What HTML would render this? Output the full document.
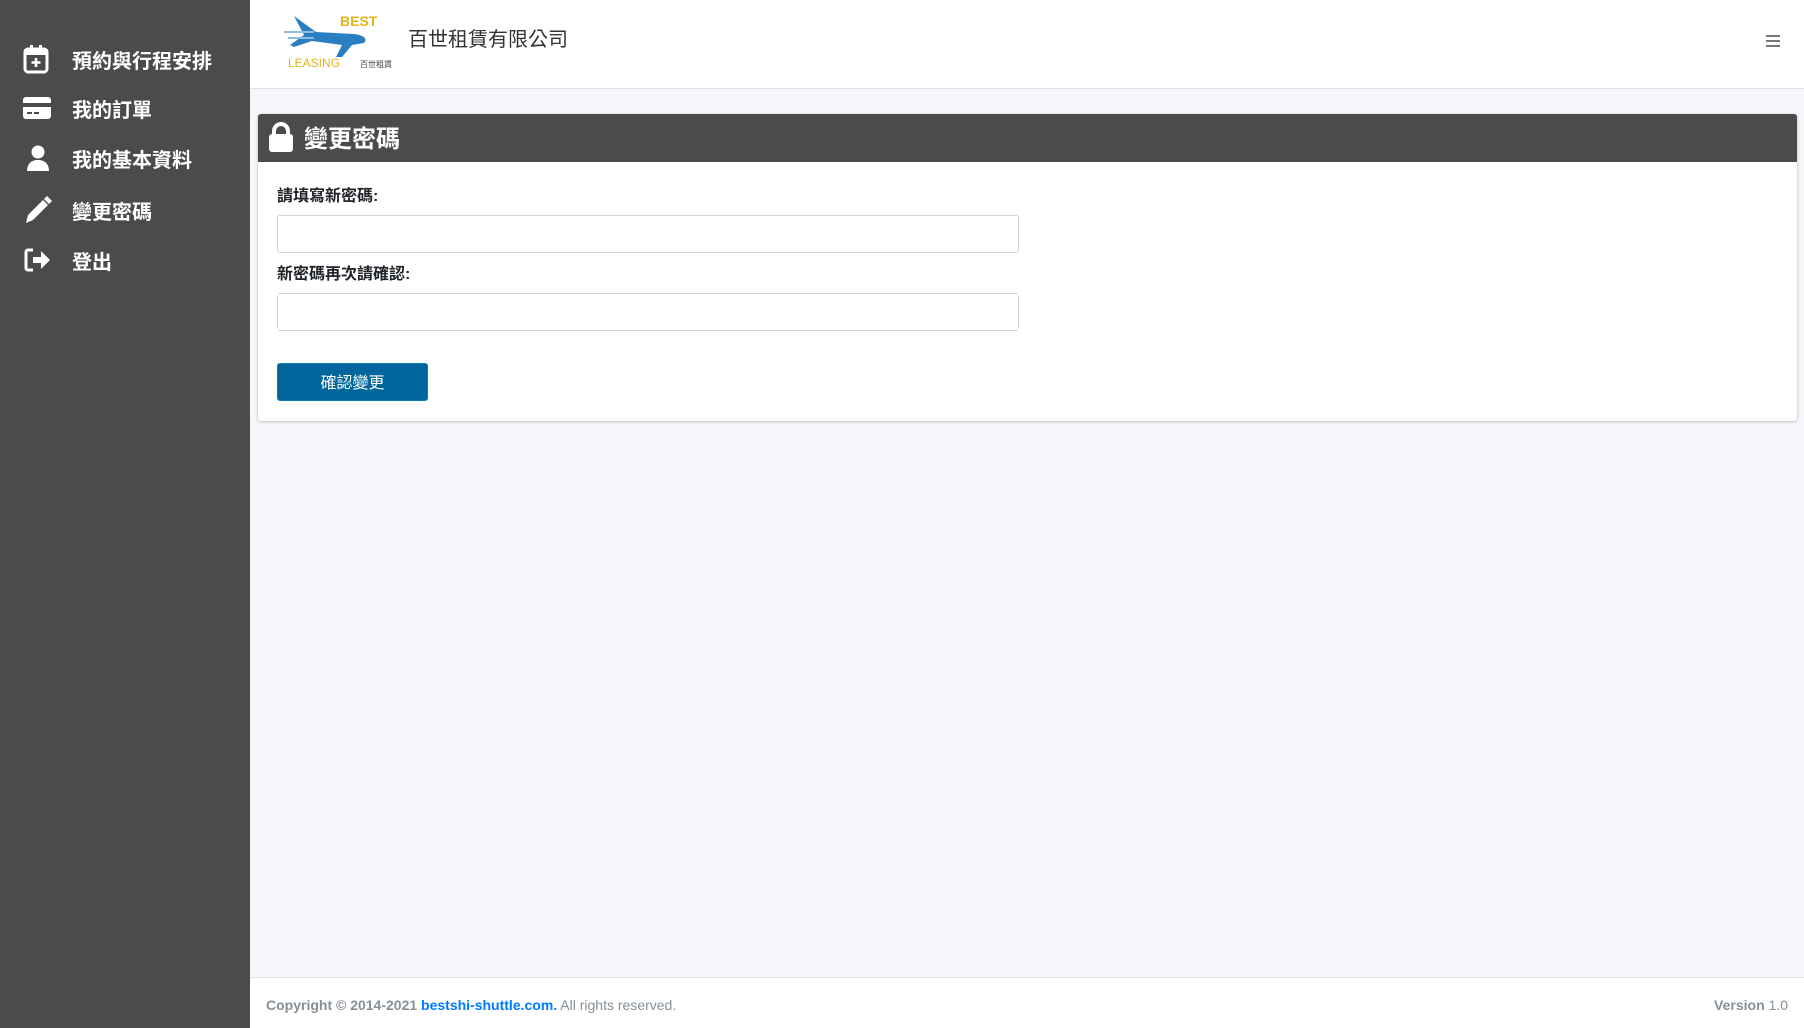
<!DOCTYPE html>
<html><head><meta charset="utf-8"><style>
*{box-sizing:border-box;margin:0;padding:0}
body{width:1804px;height:1028px;overflow:hidden;background:#f4f6f9;font-family:"Liberation Sans","Noto Sans CJK TC",sans-serif;position:relative}
.side{position:absolute;left:0;top:0;width:250px;height:1028px;background:#4b4b4b}
.item{position:absolute;left:22px;color:#fff;font-weight:bold;font-size:20px;display:flex;align-items:center;height:30px}
.item svg{width:30px;height:30px;margin-right:20px}
.hdr{position:absolute;left:250px;top:0;right:0;height:89px;background:#fff;border-bottom:1px solid #dee2e6}
.card{position:absolute;left:258px;top:114px;width:1539px;height:307px;background:#fff;border-radius:3px;box-shadow:0 0 1px rgba(0,0,0,.2),0 1px 3px rgba(0,0,0,.2)}
.ch{height:48px;background:#4b4b4b;border-radius:3px 3px 0 0;color:#fff;font-weight:bold;font-size:24px;display:flex;align-items:center;padding-left:10px;padding-bottom:3px}
.lab{position:absolute;left:19px;font-weight:bold;font-size:16px;color:#212529}
.inp{position:absolute;left:19px;width:742px;height:38px;border:1px solid #ced4da;border-radius:3px}
.btn{position:absolute;left:19px;top:249px;width:151px;height:38px;background:#00669c;border:1px solid #0a7ab0;border-radius:3px;color:#fff;font-size:16px;display:flex;align-items:center;justify-content:center;padding-bottom:2px}
.foot{position:absolute;left:250px;top:977px;right:0;height:51px;background:#fff;border-top:1px solid #dee2e6;font-size:14px;color:#869099}
</style></head><body>
<div class="side">
<div class="item" style="top:44px"><svg viewBox="0 0 30 30"><rect x="3" y="5" width="22" height="23" rx="3" fill="none" stroke="#fff" stroke-width="3"/><rect x="3" y="5" width="22" height="6" fill="#fff"/><rect x="8" y="1" width="3" height="6" fill="#fff"/><rect x="17" y="1" width="3" height="6" fill="#fff"/><path d="M14 14v9M9.5 18.5h9" stroke="#fff" stroke-width="2.6"/></svg>預約與行程安排</div>
<div class="item" style="top:93px"><svg viewBox="0 0 30 30"><rect x="1" y="4" width="28" height="22" rx="3" fill="#fff"/><rect x="1" y="10" width="28" height="4" fill="#4b4b4b"/><rect x="5" y="19" width="5" height="2" fill="#4b4b4b"/><rect x="12" y="19" width="5" height="2" fill="#4b4b4b"/></svg>我的訂單</div>
<div class="item" style="top:143px"><svg viewBox="0 0 30 30"><circle cx="16" cy="9" r="6.5" fill="#fff"/><path d="M5 28c0-7 4-11 11-11s11 4 11 11z" fill="#fff"/></svg>我的基本資料</div>
<div class="item" style="top:195px"><svg viewBox="0 0 30 30"><path d="M4 28l2-8L21 5l5 5L11 25z" fill="#fff"/><path d="M22 4l3-3 5 5-3 3z" fill="#fff"/></svg>變更密碼</div>
<div class="item" style="top:245px"><svg viewBox="0 0 30 30"><path d="M11 5H6a2 2 0 0 0-2 2v16a2 2 0 0 0 2 2h5" fill="none" stroke="#fff" stroke-width="3"/><path d="M11 12h8V6l9 9-9 9v-6h-8z" fill="#fff"/></svg>登出</div>
</div>
<div class="hdr">
<svg style="position:absolute;left:30px;top:10px" width="112" height="60" viewBox="0 0 112 60"><path d="M14 6l22 16 38 2c10 1 14 5 10 9l-12 2-10 12-6 0 6-12-30-4-18 6-4-2 14-10z" fill="#2b7fc0"/><path d="M4 22h30M8 28h26" stroke="#8cbde0" stroke-width="2"/><text x="60" y="16" font-size="14" font-weight="bold" fill="#e3b512" font-family="Liberation Sans">BEST</text><text x="8" y="57" font-size="12" fill="#e3b512" font-family="Liberation Sans">LEASING</text><text x="80" y="57" font-size="8" fill="#444" font-family="Noto Sans CJK TC">百世租賃</text></svg>
<div style="position:absolute;left:158px;top:23px;font-size:20px;color:#333">百世租賃有限公司</div>
<div style="position:absolute;left:1516px;top:35px;width:14px"><div style="height:2px;background:#777;margin-bottom:3px"></div><div style="height:2px;background:#777;margin-bottom:3px"></div><div style="height:2px;background:#777"></div></div>
</div>
<div class="card">
<div class="ch"><svg width="26" height="30" viewBox="0 0 26 30" style="margin-right:10px"><path d="M6 13V9a7 7 0 0 1 14 0v4" fill="none" stroke="#fff" stroke-width="4"/><rect x="1" y="12" width="24" height="18" rx="3" fill="#fff"/></svg>變更密碼</div>
<div class="lab" style="top:68px">請填寫新密碼:</div>
<div class="inp" style="top:101px"></div>
<div class="lab" style="top:146px">新密碼再次請確認:</div>
<div class="inp" style="top:179px"></div>
<div class="btn">確認變更</div>
</div>
<div class="foot">
<div style="position:absolute;left:16px;top:19px"><b>Copyright © 2014-2021 <span style="color:#007bff">bestshi-shuttle.com.</span></b> All rights reserved.</div>
<div style="position:absolute;right:16px;top:19px"><b>Version</b> 1.0</div>
</div>
</body></html>
